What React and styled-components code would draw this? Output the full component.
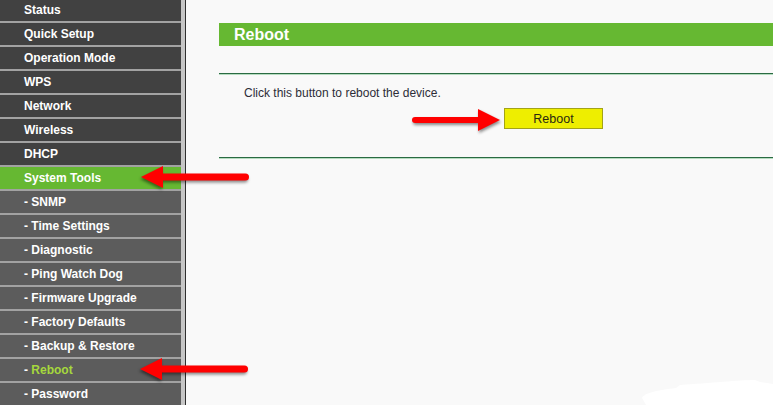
import React from "react";
import styled, { createGlobalStyle } from "styled-components";

const GlobalStyle = createGlobalStyle`
  html, body { margin: 0; padding: 0; background: #f9f9f9; overflow: hidden; }
  body { font-family: "Liberation Sans", Arial, sans-serif; }
`;

const Page = styled.div`
  position: relative;
  display: flex;
  width: 773px;
  height: 405px;
  overflow: hidden;
  background: #f9f9f9;
`;

const Sidebar = styled.nav`
  width: 181px;
  flex: none;
  background: #5c5c5c;
  border-right: 4px solid #c6c6c6;
  overflow: hidden;
`;

const Menu = styled.ul`
  list-style: none;
  margin: -1px 0 0 0;
  padding: 0;
`;

const MenuItem = styled.li`
  height: 22px;
  line-height: 22px;
  border-bottom: 2px solid #a2a2a2;
  padding-left: 24px;
  font-size: 12px;
  font-weight: bold;
  white-space: nowrap;
  color: ${(p) => (p.$current ? "#a6d83c" : "#ffffff")};
  background: ${(p) =>
    p.$active ? "#66b832" : p.$sub ? "#5c5c5c" : "#414141"};
`;

const Main = styled.main`
  flex: 1;
  border-left: 1px solid #2f2f2f;
  padding: 23px 0 0 33px;
  background: #f9f9f9;
`;

const TitleBar = styled.h1`
  margin: 0;
  height: 23px;
  line-height: 23px;
  padding-left: 15px;
  background: #66b832;
  color: #ffffff;
  font-size: 16px;
  font-weight: bold;
`;

const Rule = styled.div`
  height: 0;
  margin-top: ${(p) => p.$gap}px;
  border-top: 1px solid #2b6b43;
  border-bottom: 1px solid #b6dcc0;
`;

const Body = styled.section`
  padding: 11px 0 0 25px;
`;

const Note = styled.p`
  margin: 0;
  font-size: 12px;
  line-height: 14px;
  color: #2d2d38;
`;

const ButtonRow = styled.div`
  display: flex;
  padding: 8px 0 0 260px;
`;

const RebootButton = styled.button`
  width: 99px;
  height: 21px;
  padding: 0;
  margin: 0;
  background: #eeee00;
  border: 1px solid #a3a318;
  color: #2a2a10;
  font-family: "Liberation Sans", Arial, sans-serif;
  font-size: 12.5px;
  cursor: pointer;
`;

const ArrowSvg = styled.svg`
  position: absolute;
  left: ${(p) => p.$x}px;
  top: ${(p) => p.$y}px;
  overflow: visible;
  filter: drop-shadow(1px 2px 1.5px rgba(0, 0, 0, 0.45));
  transform: ${(p) => (p.$left ? "scaleX(-1)" : "none")};
`;

const Blob = styled.svg`
  position: absolute;
  left: 640px;
  top: 376px;
`;

function Arrow({ x, y, length, left, thick = 7 }) {
  const h = 22;
  const head = 22;
  const cy = h / 2;
  return (
    <ArrowSvg
      $x={x}
      $y={y - cy}
      $left={left}
      width={length}
      height={h}
      viewBox={`0 0 ${length} ${h}`}
    >
      <line
        x1={thick / 2}
        y1={cy}
        x2={length - head + 2}
        y2={cy}
        stroke="#ff0000"
        strokeWidth={thick}
        strokeLinecap="round"
      />
      <polygon
        points={`${length - head},0 ${length},${cy} ${length - head},${h}`}
        fill="#ff0000"
      />
    </ArrowSvg>
  );
}

const items = [
  { label: "Status" },
  { label: "Quick Setup" },
  { label: "Operation Mode" },
  { label: "WPS" },
  { label: "Network" },
  { label: "Wireless" },
  { label: "DHCP" },
  { label: "System Tools", active: true },
  { label: "- SNMP", sub: true },
  { label: "- Time Settings", sub: true },
  { label: "- Diagnostic", sub: true },
  { label: "- Ping Watch Dog", sub: true },
  { label: "- Firmware Upgrade", sub: true },
  { label: "- Factory Defaults", sub: true },
  { label: "- Backup & Restore", sub: true },
  { label: "- Reboot", sub: true, current: true },
  { label: "- Password", sub: true },
];

export default function App() {
  return (
    <>
      <GlobalStyle />
      <Page>
        <Sidebar>
          <Menu>
            {items.map((it) => (
              <MenuItem
                key={it.label}
                $sub={it.sub}
                $active={it.active}
                $current={it.current}
              >
                {it.current ? (
                  <>
                    <span style={{ color: "#ffffff" }}>-</span>
                    {it.label.slice(1)}
                  </>
                ) : (
                  it.label
                )}
              </MenuItem>
            ))}
          </Menu>
        </Sidebar>
        <Main>
          <TitleBar>Reboot</TitleBar>
          <Rule $gap={27} />
          <Body>
            <Note>Click this button to reboot the device.</Note>
            <ButtonRow>
              <RebootButton type="button">Reboot</RebootButton>
            </ButtonRow>
          </Body>
          <Rule $gap={28} />
        </Main>

        <Arrow x={412} y={120} length={88} thick={6} />
        <Arrow x={141} y={177} length={108} left />
        <Arrow x={140} y={369} length={108} left />

        <Blob width="133" height="29" viewBox="0 0 133 29">
          <path
            d="M2 22 C4 17 18 14 36 12 L40 9 C70 7 100 4 115 4 L120 6 L133 8 L133 29 L6 29 Z"
            fill="#ffffff"
          />
        </Blob>
      </Page>
    </>
  );
}
